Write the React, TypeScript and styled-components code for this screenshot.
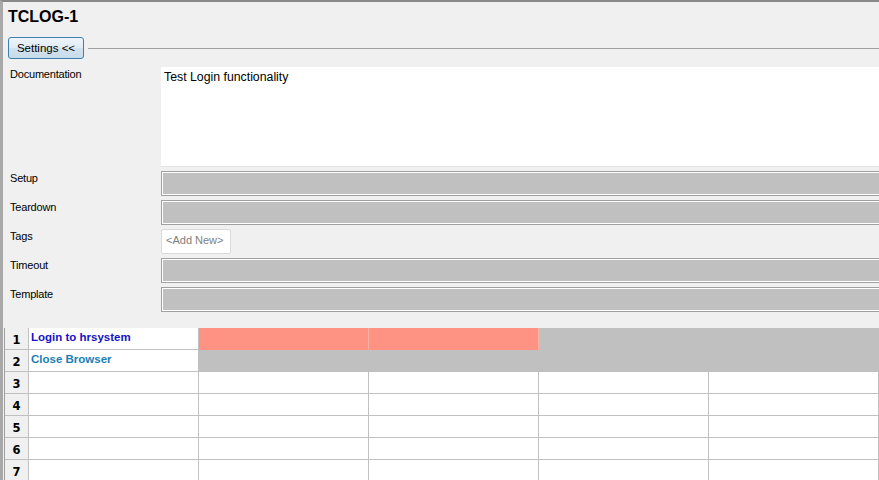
import React, { FC } from 'react';
import styled, { createGlobalStyle } from 'styled-components';

const GlobalStyle = createGlobalStyle`
  html, body {
    margin: 0;
    padding: 0;
    background: #f0f0f0;
    font-family: "Liberation Sans", Arial, sans-serif;
  }
`;

const Frame = styled.div`
  width: 879px;
  height: 480px;
  box-sizing: border-box;
  border-left: 3px solid #a8a8a8;
  border-top: 2px solid #888;
  background: #f0f0f0;
  overflow: hidden;
`;

const Title = styled.div`
  font-weight: bold;
  font-size: 16px;
  color: #000;
  padding: 6px 0 0 5px;
  height: 35px;
  box-sizing: border-box;
`;

const SettingsBar = styled.div`
  display: flex;
  align-items: center;
  padding-left: 5px;
  height: 22px;
`;

const SettingsButton = styled.button`
  width: 76px;
  height: 22px;
  box-sizing: border-box;
  border: 1px solid #3c7fb1;
  border-radius: 3px;
  background: linear-gradient(#eef5fb, #e0ebf4 50%, #d2e2ee 51%, #c8dbea);
  font-family: "Liberation Sans", Arial, sans-serif;
  font-size: 11.5px;
  color: #000;
  padding: 0;
`;

const Rule = styled.div`
  flex: 1;
  height: 1px;
  background: #a0a0a0;
  margin-left: 4px;
`;

const Form = styled.div`
  display: grid;
  grid-template-columns: 158px 1fr;
  row-gap: 4px;
  margin-top: 8px;
`;

const Label = styled.div`
  font-size: 11px;
  color: #000;
  padding: 1px 0 0 7px;
  letter-spacing: -0.2px;
`;

const DocArea = styled.div`
  background: #fff;
  height: 100px;
  font-size: 12.3px;
  padding: 3px 0 0 3px;
  box-sizing: border-box;
  border-bottom: 1px solid #e4e4e4;
`;

const Field = styled.div`
  height: 25px;
  box-sizing: border-box;
  border: 1px solid #a0a0a0;
  border-right: none;
  box-shadow: inset 1px 1px 0 #fff, inset 0 -1px 0 #fff;
  background: #c0c0c0;
`;

const TagsRow = styled.div`
  height: 25px;
  display: flex;
`;

const AddNew = styled.div`
  width: 70px;
  height: 25px;
  box-sizing: border-box;
  border: 1px solid #dadada;
  border-radius: 2px;
  background: #fff;
  color: #808080;
  font-size: 11px;
  padding: 4px 0 0 4px;
`;

const Grid = styled.div`
  margin: 16px 0 0 1px;
  display: grid;
  grid-template-columns: 24px repeat(5, 170px);
  grid-auto-rows: 22px;
  border-left: 1px solid #a0a0a0;
`;

const RowHead = styled.div`
  background: #f0f0f0;
  border-right: 1px solid #c0c0c0;
  border-bottom: 1px solid #c0c0c0;
  font-family: "DejaVu Sans", Verdana, sans-serif;
  font-weight: bold;
  font-size: 11.5px;
  display: flex;
  align-items: center;
  justify-content: center;
  padding-top: 2px;
  box-sizing: border-box;
`;

type CellKind = 'plain' | 'error' | 'empty';

const Cell = styled.div<{ $kind: CellKind; $color?: string }>`
  box-sizing: border-box;
  font-weight: bold;
  font-size: 11.5px;
  padding: 3px 0 0 2px;
  color: ${p => p.$color || '#000'};
  background: ${p => (p.$kind === 'error' ? '#fe9283' : p.$kind === 'empty' ? '#c0c0c0' : '#fff')};
  border-right: 1px solid ${p => (p.$kind === 'error' ? '#ffb0a4' : '#c0c0c0')};
  border-bottom: 1px solid ${p => (p.$kind === 'error' ? '#fe9283' : '#c0c0c0')};
`;

type Row = { cells: { kind: CellKind; text?: string; color?: string }[] };

const rows: Row[] = [
  {
    cells: [
      { kind: 'plain', text: 'Login to hrsystem', color: '#1414c4' },
      { kind: 'error' },
      { kind: 'error' },
      { kind: 'empty' },
      { kind: 'empty' },
    ],
  },
  {
    cells: [
      { kind: 'plain', text: 'Close Browser', color: '#1a80b6' },
      { kind: 'empty' },
      { kind: 'empty' },
      { kind: 'empty' },
      { kind: 'empty' },
    ],
  },
  ...[3, 4, 5, 6, 7].map(() => ({
    cells: Array.from({ length: 5 }, () => ({ kind: 'plain' as CellKind })),
  })),
];

const App: FC = () => (
  <>
    <GlobalStyle />
    <Frame>
      <Title>TCLOG-1</Title>
      <SettingsBar>
        <SettingsButton>Settings &lt;&lt;</SettingsButton>
        <Rule />
      </SettingsBar>
      <Form>
        <Label>Documentation</Label>
        <DocArea>Test Login functionality</DocArea>
        <Label>Setup</Label>
        <Field />
        <Label>Teardown</Label>
        <Field />
        <Label>Tags</Label>
        <TagsRow>
          <AddNew>&lt;Add New&gt;</AddNew>
        </TagsRow>
        <Label>Timeout</Label>
        <Field />
        <Label>Template</Label>
        <Field />
      </Form>
      <Grid>
        {rows.map((row, i) => (
          <React.Fragment key={i}>
            <RowHead>{i + 1}</RowHead>
            {row.cells.map((c, j) => (
              <Cell key={j} $kind={c.kind} $color={c.color}>
                {c.text}
              </Cell>
            ))}
          </React.Fragment>
        ))}
      </Grid>
    </Frame>
  </>
);

export default App;
